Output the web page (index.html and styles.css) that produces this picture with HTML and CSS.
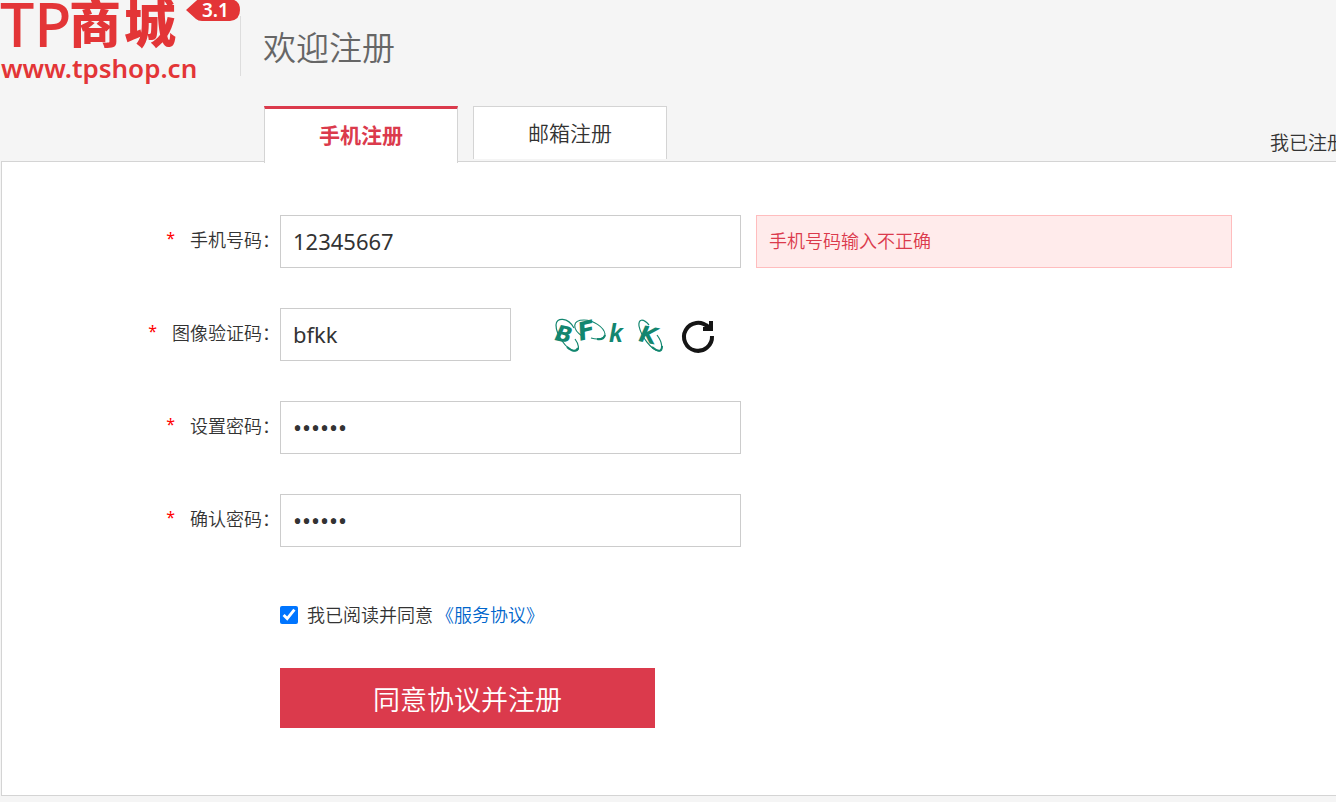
FILE: index.html
```
<!DOCTYPE html>
<html lang="zh-CN">
<head>
<meta charset="utf-8">
<title>欢迎注册</title>
<link rel="stylesheet" href="styles.css">
</head>
<body>
<div class="page">
  <header class="header">
    <a class="logo" href="#" aria-label="TP商城">
      <svg class="logo-art" viewBox="0 0 240 90" aria-hidden="true">
        <text class="logo-latin" x="0" y="47">TP</text>
        <text class="logo-han" x="69" y="43">商</text>
        <text class="logo-han" x="124" y="43">城</text>
        <text class="logo-url" x="1" y="78">www.tpshop.cn</text>
        <path class="logo-badge" d="M186 10 L196 1 Q198 -1 202 -1 H230 Q240 0 240 10 Q240 20 230 21 H202 Q198 21 196 19 Z"/>
        <text class="logo-version" x="202" y="17">3.1</text>
      </svg>
    </a>
    <h1 class="title">欢迎注册</h1>
  </header>
  <nav class="tabs">
    <a class="tab tab-active" href="#">手机注册</a>
    <a class="tab" href="#">邮箱注册</a>
    <a class="login-link" href="#">我已注册</a>
  </nav>
  <main class="panel">
    <form class="form">
      <div class="row">
        <label class="label" for="phone"><span class="star">*</span>手机号码：</label>
        <input class="field" id="phone" type="text" value="12345667">
        <p class="error" role="alert">手机号码输入不正确</p>
      </div>
      <div class="row">
        <label class="label" for="captcha"><span class="star">*</span>图像验证码：</label>
        <input class="field field-short" id="captcha" type="text" value="bfkk">
        <button class="captcha" type="button" aria-label="刷新验证码">
          <svg class="captcha-art" viewBox="0 0 180 52" aria-hidden="true">
            <g fill="none" stroke="#12866f">
              <path d="M34 19 C28 8 16 8 16 16 C16 25 26 41 35 42 C41 42 38 34 35 30" stroke-width="1.2"/>
              <path d="M27 38 Q35 45 38 39" stroke-width="2"/>
              <path d="M42 27 C32 20 32 11 44 11 C53 11 64 18 65 25 C65 30 58 31 51 29" stroke-width="1.1"/>
              <path d="M57 30 Q64 31 65 26" stroke-width="2"/>
              <path d="M109 16 C103 9 98 10 99 17 C101 27 111 41 119 42 C123 42 123 34 117 26" stroke-width="1.2"/>
              <path d="M112 38 Q122 46 122 37" stroke-width="2"/>
            </g>
            <g class="captcha-text">
              <text x="14" y="31" font-size="22" transform="rotate(12 14 31)">B</text>
              <text x="40" y="32" font-size="25" transform="rotate(-14 40 32)">F</text>
              <text class="captcha-narrow" x="69" y="33" font-size="25">k</text>
              <text x="98" y="32" font-size="23" transform="rotate(12 98 32)">K</text>
            </g>
            <g fill="none" stroke="#151515">
              <path d="M168 18 A14 14 0 1 0 172 27" stroke-width="4"/>
              <path d="M163 20 H171 V12" stroke-width="4"/>
              <path d="M166 16 L171 20" stroke-width="4"/>
            </g>
          </svg>
        </button>
      </div>
      <div class="row">
        <label class="label" for="pwd"><span class="star">*</span>设置密码：</label>
        <input class="field field-password" id="pwd" type="password" value="123456">
      </div>
      <div class="row">
        <label class="label" for="pwd2"><span class="star">*</span>确认密码：</label>
        <input class="field field-password" id="pwd2" type="password" value="123456">
      </div>
      <div class="agree">
        <input class="check" id="agree" type="checkbox" checked>
        <label for="agree">我已阅读并同意</label><a class="terms" href="#">《服务协议》</a>
      </div>
      <button class="submit" type="submit">同意协议并注册</button>
    </form>
  </main>
</div>
</body>
</html>
```
FILE: styles.css
```
* {
  box-sizing: border-box;
}

body {
  margin: 0;
  overflow-x: hidden;
  background: #f5f5f5;
  color: #333;
  font-family: "Noto Sans", "Noto Sans CJK SC", sans-serif;
  font-size: 18px;
  font-weight: 350;
}

a {
  color: inherit;
  text-decoration: none;
}

.page {
  width: calc(100% + 20px);
  padding-left: 1px;
}

.header {
  display: flex;
  align-items: flex-start;
  height: 106px;
  margin-left: -1px;
}

.logo-art {
  display: block;
  width: 240px;
  height: 90px;
  fill: #e33537;
}

.logo-latin {
  font-size: 61px;
  font-weight: 500;
}

.logo-han {
  font-family: "Noto Sans CJK SC", sans-serif;
  font-size: 52px;
  font-weight: 900;
}

.logo-url {
  font-size: 26px;
  font-weight: 600;
}

.logo-version {
  fill: #fff;
  font-size: 19px;
  font-weight: 600;
}

.title {
  margin: 16px 0 0;
  padding: 4px 0 0 22px;
  border-left: 1px solid #ddd;
  color: #666;
  font-size: 33px;
  font-weight: 350;
  line-height: 56px;
}

.tabs {
  display: flex;
  align-items: flex-start;
  gap: 15px;
  height: 55px;
  padding-left: 263px;
}

.tab {
  width: 194px;
  height: 53px;
  border: 1px solid #d4d4d4;
  border-bottom: 0;
  background: #fff;
  font-size: 21px;
  line-height: 53px;
  text-align: center;
}

.tab-active {
  z-index: 1;
  height: 57px;
  border-top: 3px solid #db3a4c;
  color: #db3a4c;
  font-weight: 700;
}

.login-link {
  margin-left: auto;
  padding-right: 10px;
  font-size: 19px;
  line-height: 74px;
}

.panel {
  padding: 53px 0 67px;
  border: 1px solid #d4d4d4;
  background: #fff;
}

.form {
  display: flex;
  flex-direction: column;
  align-items: flex-start;
}

.row {
  display: flex;
  margin-bottom: 40px;
}

.label {
  width: 278px;
  line-height: 50px;
  text-align: right;
}

.star {
  margin-right: 15px;
  color: #f00;
  font-size: 16px;
  font-weight: 400;
  line-height: 1;
  vertical-align: 3px;
}

.field {
  width: 461px;
  height: 53px;
  padding: 0 12px 2px;
  border: 1px solid #ccc;
  border-radius: 0;
  background: #fff;
  color: #333;
  font: 400 22px "Noto Sans", "Noto Sans CJK SC", sans-serif;
}

.field-short {
  width: 231px;
}

.field-password {
  padding-bottom: 0;
  font-size: 24px;
}

.error {
  width: 476px;
  margin: 0 0 0 15px;
  padding-left: 12px;
  border: 1px solid #ffbdbe;
  background: #ffebeb;
  color: #db3a4c;
  line-height: 51px;
}

.captcha {
  margin-left: 29px;
  padding: 0;
  border: 0;
  background: none;
  cursor: pointer;
}

.captcha-art {
  display: block;
  width: 180px;
  height: 52px;
}

.captcha-text {
  fill: #12866f;
  font-family: "DejaVu Sans", sans-serif;
  font-style: italic;
  font-weight: 700;
}

.captcha-narrow {
  font-family: "Liberation Sans", sans-serif;
}

.agree {
  display: flex;
  align-items: center;
  margin: 14px 0 39px 278px;
  line-height: 28px;
}

.check {
  width: 18px;
  height: 18px;
  margin: 0 9px 0 0;
}

.terms {
  margin-left: 3px;
  color: #06c;
}

.submit {
  width: 375px;
  height: 60px;
  margin-left: 278px;
  padding: 0;
  border: 0;
  background: #db3a4c;
  color: #fff;
  font: inherit;
  font-size: 27px;
}
```
